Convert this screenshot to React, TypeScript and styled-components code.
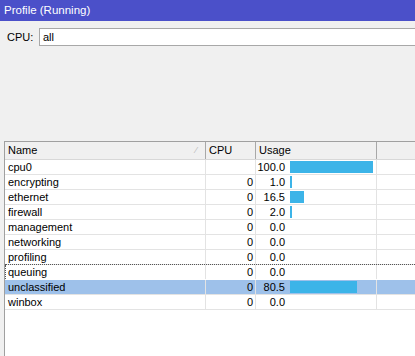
import React from "react";
import styled, { createGlobalStyle } from "styled-components";

const Global = createGlobalStyle`
  html, body { margin: 0; padding: 0; background: #f0f0f0; }
  body { font-family: "Liberation Sans", Arial, sans-serif; font-size: 11px; color: #000; }
`;

const Window = styled.div`
  width: 415px;
  height: 356px;
  display: flex;
  flex-direction: column;
  background: #f0f0f0;
  overflow: hidden;
`;

const TitleBar = styled.div`
  height: 21px;
  flex: none;
  background: #4b50c9;
  color: #fff;
  font-size: 11.5px;
  line-height: 21px;
  padding-left: 4px;
`;

const FilterRow = styled.div`
  display: flex;
  align-items: center;
  margin-top: 7px;
  height: 18px;
  flex: none;
`;

const Label = styled.span`
  width: 32px;
  padding-left: 7px;
  line-height: 18px;
`;

const Input = styled.div`
  flex: 1;
  height: 16px;
  background: #fff;
  border: 1px solid #a8a8a8;
  border-right: none;
  line-height: 16px;
  padding-left: 3px;
`;

const Table = styled.div`
  margin-top: 95px;
  margin-left: 4px;
  flex: 1;
  background: #fff;
  border-left: 1px solid #a0a0a0;
  display: flex;
  flex-direction: column;
`;

const Cols = "201px 50px 121px 1fr";

const HeaderRow = styled.div`
  display: grid;
  grid-template-columns: ${Cols};
  height: 17px;
  background: #f0f0f0;
  border-top: 1px solid #a0a0a0;
  border-bottom: 1px solid #d8d8d8;
`;

const HeadCell = styled.div`
  position: relative;
  border-right: 1px solid #a8a8a8;
  padding-left: 3px;
  line-height: 17px;
  &:last-child { border-right: none; }
`;

const SortMark = styled.span`
  position: absolute;
  right: 8px;
  top: 0;
  color: #b8b8b8;
  font-size: 9px;
`;

const Row = styled.div<{ $selected?: boolean; $focus?: boolean }>`
  display: grid;
  grid-template-columns: ${Cols};
  height: 14px;
  border-bottom: 1px solid ${(p) => (p.$focus ? "transparent" : "#e3e3e3")};
  border-top: ${(p) => (p.$focus ? "1px dotted #555" : "none")};
  margin-top: ${(p) => (p.$focus ? "-1px" : "0")};
  box-shadow: ${(p) => (p.$focus ? "inset 1px 0 0 #fff" : "none")};
  background: ${(p) => (p.$selected ? "#9ec1ea" : "transparent")};
  line-height: 14px;
  position: relative;
`;

const FocusLeft = styled.span`
  position: absolute;
  left: 0;
  top: 0;
  bottom: 0;
  border-left: 1px dotted #555;
`;

const Cell = styled.div<{ $align?: string }>`
  border-right: 1px solid #e3e3e3;
  padding: 0 2px 0 3px;
  text-align: ${(p) => p.$align || "left"};
  white-space: nowrap;
  overflow: hidden;
  &:last-child { border-right: none; }
`;

const UsageCell = styled.div`
  border-right: 1px solid #e3e3e3;
  display: flex;
  align-items: center;
`;

const UsageValue = styled.span`
  width: 29px;
  text-align: right;
  flex: none;
`;

const BarTrack = styled.div`
  margin-left: 5px;
  width: 83px;
  height: 12px;
  display: flex;
`;

const Bar = styled.div`
  height: 12px;
  background: #3cb4e8;
`;

const Empty = styled.div`
  flex: 1;
`;

const rows = [
  { name: "cpu0", cpu: "", usage: 100.0 },
  { name: "encrypting", cpu: "0", usage: 1.0 },
  { name: "ethernet", cpu: "0", usage: 16.5 },
  { name: "firewall", cpu: "0", usage: 2.0 },
  { name: "management", cpu: "0", usage: 0.0 },
  { name: "networking", cpu: "0", usage: 0.0 },
  { name: "profiling", cpu: "0", usage: 0.0 },
  { name: "queuing", cpu: "0", usage: 0.0, focus: true },
  { name: "unclassified", cpu: "0", usage: 80.5, selected: true },
  { name: "winbox", cpu: "0", usage: 0.0 },
];

export default function App() {
  return (
    <>
      <Global />
      <Window>
        <TitleBar>Profile (Running)</TitleBar>
        <FilterRow>
          <Label>CPU:</Label>
          <Input>all</Input>
        </FilterRow>
        <Table>
          <HeaderRow>
            <HeadCell>
              Name<SortMark>⁄</SortMark>
            </HeadCell>
            <HeadCell>CPU</HeadCell>
            <HeadCell>Usage</HeadCell>
            <HeadCell />
          </HeaderRow>
          {rows.map((r) => (
            <Row key={r.name} $selected={r.selected} $focus={r.focus}>
              {r.focus && <FocusLeft />}
              <Cell>{r.name}</Cell>
              <Cell $align="right">{r.cpu}</Cell>
              <UsageCell>
                <UsageValue>{r.usage.toFixed(1)}</UsageValue>
                <BarTrack>
                  {r.usage > 0 && (
                    <Bar style={{ width: `${Math.max(2, Math.round((r.usage / 100) * 83))}px` }} />
                  )}
                </BarTrack>
              </UsageCell>
              <Cell />
            </Row>
          ))}
          <Empty />
        </Table>
      </Window>
    </>
  );
}
